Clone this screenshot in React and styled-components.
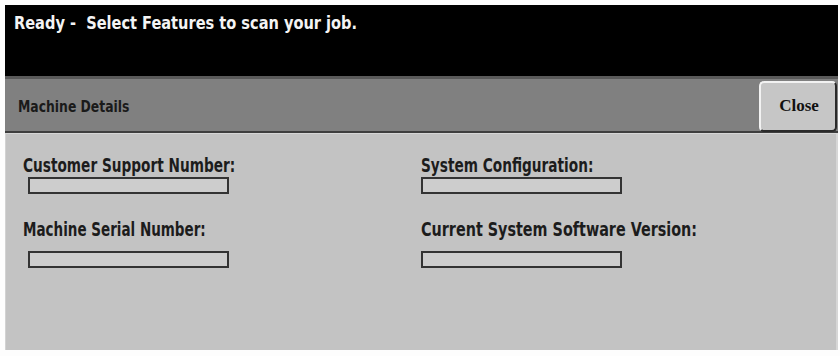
import React from "react";
import styled, { createGlobalStyle } from "styled-components";

const Global = createGlobalStyle`
  html, body { margin: 0; padding: 0; background: #ffffff; }
  body { width: 840px; height: 356px; overflow: hidden; }
`;

const condensed = `"Liberation Sans Narrow", "DejaVu Sans Condensed", "Liberation Sans", sans-serif`;

const Screen = styled.div`
  box-sizing: border-box;
  width: 840px;
  height: 356px;
  padding: 5px 2px 6px 5px;
  display: flex;
  flex-direction: column;
  background: #fdfdfd;
`;

const StatusBar = styled.div`
  height: 71px;
  background: #000;
  padding: 7px 0 0 9px;
  box-sizing: border-box;
`;

const Squeezed = styled.span`
  display: inline-block;
  white-space: pre;
  transform: scaleX(${(p) => p.$x});
  transform-origin: left center;
`;

const StatusText = styled(Squeezed)`
  color: #f4f4f4;
  font-family: ${condensed};
  font-weight: bold;
  font-size: 18px;
`;

const TitleBar = styled.div`
  height: 57px;
  box-sizing: border-box;
  background: #808080;
  border-top: 3px solid #5a5a5a;
  border-bottom: 2px solid #3e3e3e;
  display: flex;
  align-items: center;
  justify-content: space-between;
  padding: 0 1px 0 13px;
`;

const Title = styled(Squeezed)`
  font-family: ${condensed};
  font-weight: bold;
  font-size: 16px;
  color: #1a1a1a;
  padding-top: 2px;
`;

const CloseButton = styled.button`
  width: 78px;
  height: 51px;
  margin-top: 2px;
  box-sizing: border-box;
  background: #c6c6c6;
  border: 2px solid;
  border-color: #f2f2f2 #2a2a2a #2a2a2a #f2f2f2;
  border-radius: 5px;
  font-family: "Liberation Serif", serif;
  font-weight: bold;
  font-size: 17px;
  color: #111;
  padding: 0 0 0 2px;
  cursor: pointer;
`;

const Panel = styled.div`
  flex: 1;
  background: #c3c3c3;
  border-top: 1px solid #d6d6d6;
  border-left: 1px solid #d2d2d2;
  border-right: 2px solid #d6d6d6;
  display: grid;
  grid-template-columns: 398px 1fr;
  grid-auto-rows: 64px;
  align-content: start;
  padding: 20px 0 0 17px;
`;

const Field = styled.div`
  display: flex;
  flex-direction: column;
  align-items: flex-start;
`;

const Label = styled(Squeezed)`
  font-family: ${condensed};
  font-weight: bold;
  font-size: 19px;
  line-height: 22px;
  color: #1c1c1c;
  margin-bottom: ${(p) => p.$gap}px;
`;

const ValueBox = styled.div`
  width: 201px;
  height: 17px;
  box-sizing: border-box;
  border: 2px solid #333;
  background: #cdcdcd;
  margin-left: ${(p) => p.$indent}px;
`;

const fields = [
  { label: "Customer Support Number:", gap: 1, indent: 5, x: 0.8 },
  { label: "System Configuration:", gap: 1, indent: 0, x: 0.8 },
  { label: "Machine Serial Number:", gap: 11, indent: 5, x: 0.79 },
  { label: "Current System Software Version:", gap: 11, indent: 0, x: 0.84 },
];

export default function App() {
  return (
    <>
      <Global />
      <Screen>
        <StatusBar>
          <StatusText $x={0.9}>{"Ready -  Select Features to scan your job."}</StatusText>
        </StatusBar>
        <TitleBar>
          <Title $x={0.86}>Machine Details</Title>
          <CloseButton>Close</CloseButton>
        </TitleBar>
        <Panel>
          {fields.map((f) => (
            <Field key={f.label}>
              <Label $x={f.x} $gap={f.gap}>{f.label}</Label>
              <ValueBox $indent={f.indent} />
            </Field>
          ))}
        </Panel>
      </Screen>
    </>
  );
}
